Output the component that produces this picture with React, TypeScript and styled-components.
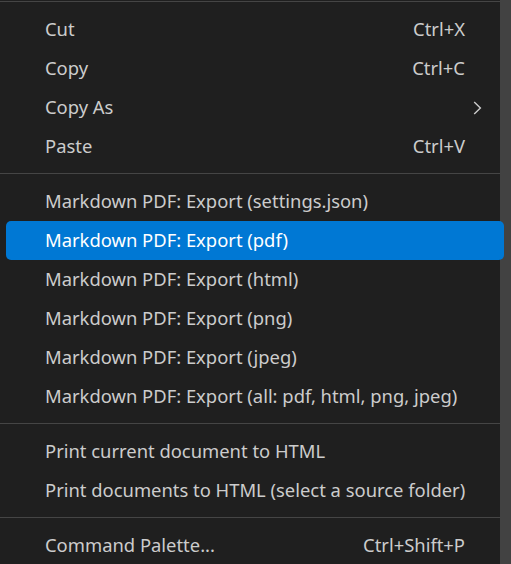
import React from "react";
import styled, { createGlobalStyle } from "styled-components";

const Global = createGlobalStyle`
  html, body { margin: 0; padding: 0; background: #1f1f1f; }
  body { width: 511px; height: 564px; overflow: hidden; }
`;

const Menu = styled.div`
  position: relative;
  width: 511px;
  height: 564px;
  box-sizing: border-box;
  padding-top: 1px;
  background: #1f1f1f;
  font-family: "Noto Sans", "Open Sans", sans-serif;
  font-size: 18.4px;
  color: #cccccc;
`;

const TopBorder = styled.div`
  height: 1px;
  width: 500px;
  background: #454545;
  margin-bottom: 8px;
`;

const Scrollbar = styled.div`
  position: absolute;
  top: 0;
  right: 0;
  width: 11px;
  height: 100%;
  background: #424242;
  z-index: 1;
`;

const Row = styled.div<{ $active?: boolean }>`
  position: relative;
  z-index: ${(p) => (p.$active ? 2 : 0)};
  display: flex;
  align-items: center;
  box-sizing: border-box;
  height: 39px;
  margin: 0 7px 0 6px;
  padding: 0 22px 2px 39px;
  border-radius: 5px;
  background: ${(p) => (p.$active ? "#0078d4" : "transparent")};
  color: ${(p) => (p.$active ? "#ffffff" : "#cccccc")};
  white-space: nowrap;
`;

const Label = styled.span`
  flex: 1;
`;

const Keybinding = styled.span`
  margin-right: 17px;
`;

const Chevron = styled.svg`
  width: 9px;
  height: 14px;
  display: block;
  margin-top: 2px;
`;

const Separator = styled.div`
  height: 1px;
  width: 500px;
  background: #454545;
  margin: 7px 0 8px;
`;

type Item = { label: string; key?: string; submenu?: boolean; active?: boolean } | "sep";

const items: Item[] = [
  { label: "Cut", key: "Ctrl+X" },
  { label: "Copy", key: "Ctrl+C" },
  { label: "Copy As", submenu: true },
  { label: "Paste", key: "Ctrl+V" },
  "sep",
  { label: "Markdown PDF: Export (settings.json)" },
  { label: "Markdown PDF: Export (pdf)", active: true },
  { label: "Markdown PDF: Export (html)" },
  { label: "Markdown PDF: Export (png)" },
  { label: "Markdown PDF: Export (jpeg)" },
  { label: "Markdown PDF: Export (all: pdf, html, png, jpeg)" },
  "sep",
  { label: "Print current document to HTML" },
  { label: "Print documents to HTML (select a source folder)" },
  "sep",
  { label: "Command Palette...", key: "Ctrl+Shift+P" },
];

export default function App() {
  return (
    <>
      <Global />
      <Menu>
        <Scrollbar />
        <TopBorder />
        {items.map((it, i) =>
          it === "sep" ? (
            <Separator key={i} />
          ) : (
            <Row key={i} $active={it.active}>
              <Label>{it.label}</Label>
              {it.key && <Keybinding>{it.key}</Keybinding>}
              {it.submenu && (
                <Chevron viewBox="0 0 9 14">
                  <path d="M1.2 1 L7.4 7 L1.2 13" fill="none" stroke="#cccccc" strokeWidth="1.4" />
                </Chevron>
              )}
            </Row>
          )
        )}
      </Menu>
    </>
  );
}
